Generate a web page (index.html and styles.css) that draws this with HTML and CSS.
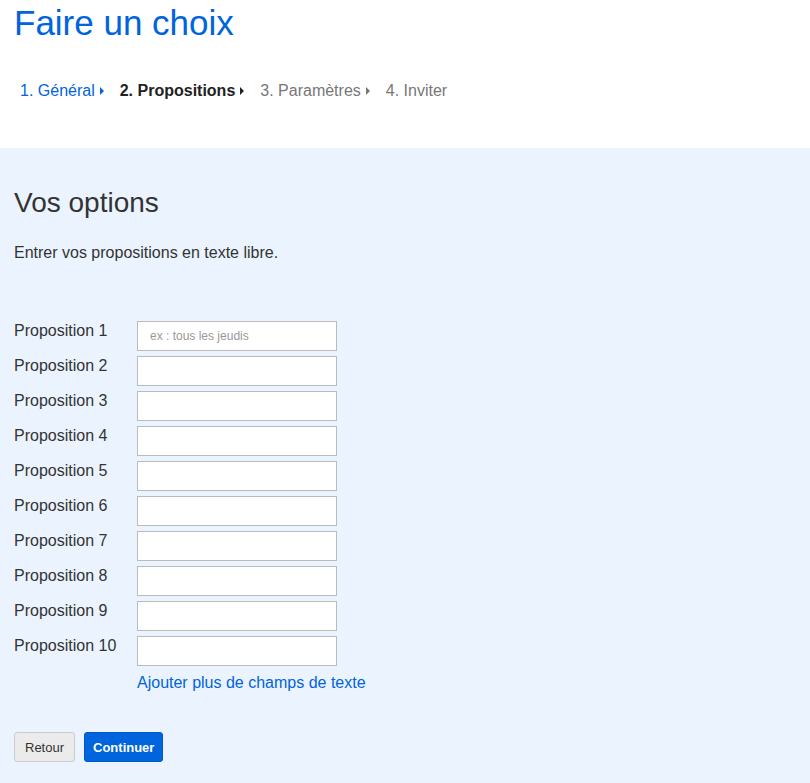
FILE: index.html
```html
<!DOCTYPE html>
<html lang="fr">
<head>
    <meta charset="UTF-8">
    <meta name="viewport" content="width=device-width, initial-scale=1.0">
    <title>Faire un choix</title>
    <link rel="stylesheet" href="styles.css">
</head>
<body>
    <header class="top">
        <h1>Faire un choix</h1>
        <ol class="steps">
            <li class="done"><a href="#">1. Général</a></li>
            <li class="current">2. Propositions</li>
            <li class="todo">3. Paramètres</li>
            <li class="todo last">4. Inviter</li>
        </ol>
    </header>
    <main class="options">
        <h2>Vos options</h2>
        <p class="intro">Entrer vos propositions en texte libre.</p>
        <form class="choices">
            <div class="row"><label>Proposition 1</label><input type="text" placeholder="ex : tous les jeudis"></div>
            <div class="row"><label>Proposition 2</label><input type="text"></div>
            <div class="row"><label>Proposition 3</label><input type="text"></div>
            <div class="row"><label>Proposition 4</label><input type="text"></div>
            <div class="row"><label>Proposition 5</label><input type="text"></div>
            <div class="row"><label>Proposition 6</label><input type="text"></div>
            <div class="row"><label>Proposition 7</label><input type="text"></div>
            <div class="row"><label>Proposition 8</label><input type="text"></div>
            <div class="row"><label>Proposition 9</label><input type="text"></div>
            <div class="row"><label>Proposition 10</label><input type="text"></div>
            <a href="#" class="more">Ajouter plus de champs de texte</a>
            <div class="actions">
                <button type="button" class="btn back">Retour</button>
                <button type="button" class="btn next">Continuer</button>
            </div>
        </form>
    </main>
</body>
</html>
```

FILE: styles.css
```css
body {
    font-family: "Liberation Sans", Arial, sans-serif;
    margin: 0;
    padding: 0;
    color: #333;
    background: #ebf3fe;
}
.top {
    background: #fff;
    height: 148px;
    padding: 0 14px;
    box-sizing: border-box;
    overflow: hidden;
}
h1 {
    margin: 0;
    padding-top: 3px;
    font-size: 35px;
    font-weight: normal;
    line-height: 40px;
    color: #0064dc;
}
.steps {
    list-style: none;
    margin: 39px 0 0 6px;
    padding: 0;
    display: flex;
    font-size: 16px;
    line-height: 18px;
}
.steps li {
    display: flex;
    align-items: center;
    margin-right: 16px;
}
.steps li::after {
    content: "";
    border-left: 4px solid currentColor;
    border-top: 4px solid transparent;
    border-bottom: 4px solid transparent;
    margin-left: 5px;
}
.steps li.last::after {
    display: none;
}
.steps a {
    color: #0064dc;
    text-decoration: none;
}
.steps .done {
    color: #0064dc;
}
.steps .current {
    font-weight: bold;
    color: #222;
}
.steps .todo {
    color: #777;
}
.options {
    padding: 40px 14px 20px;
}
h2 {
    margin: 0;
    font-size: 28px;
    font-weight: normal;
    line-height: 30px;
    color: #333;
}
.intro {
    margin: 26px 0 0;
    font-size: 16px;
    line-height: 18px;
}
.choices {
    margin-top: 59px;
}
.row {
    display: flex;
    margin-bottom: 5px;
}
.row label {
    width: 123px;
    padding-top: 1px;
    font-size: 16px;
    line-height: 18px;
}
.row input {
    width: 200px;
    height: 30px;
    box-sizing: border-box;
    border: 1px solid #bbb;
    background: #fff;
    padding: 0 12px;
    font-family: inherit;
    font-size: 12px;
}
.row input::placeholder {
    color: #999;
}
.more {
    display: inline-block;
    margin: 3px 0 0 123px;
    font-size: 16px;
    line-height: 18px;
    color: #0064dc;
    text-decoration: none;
}
.actions {
    display: flex;
    gap: 9px;
    margin-top: 40px;
}
.btn {
    height: 30px;
    padding: 0 10px;
    border-radius: 3px;
    font-family: inherit;
    font-size: 13px;
    cursor: pointer;
}
.back {
    background: #ebebeb;
    border: 1px solid #ccc;
    color: #333;
}
.next {
    padding: 0 8px;
    background: #0064dc;
    border: 1px solid #0058c4;
    color: #fff;
    font-weight: bold;
}
```
